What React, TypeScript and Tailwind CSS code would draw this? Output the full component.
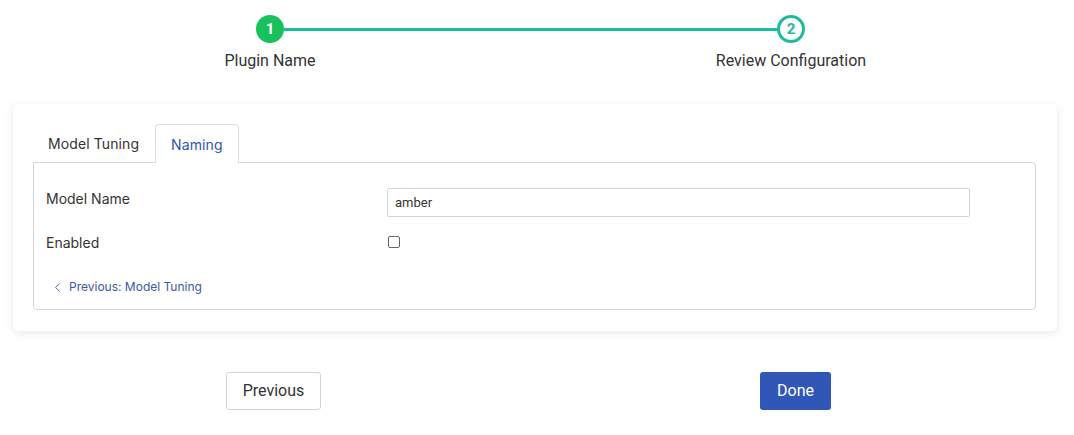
import { ChevronLeft } from "lucide-react";

export default function App() {
  return (
    <div className="h-[435px] w-[1074px] bg-white font-['Inter',sans-serif] text-[#333]">
      {/* stepper */}
      <div className="pt-[15px]">
        <div className="ml-[256px] flex w-[549px] items-center">
          <div className="flex h-[28px] w-[28px] items-center justify-center rounded-full bg-[#19c15c] font-['Roboto',sans-serif] text-[15px] font-bold text-white">
            1
          </div>
          <div className="h-[3px] flex-1 bg-[#1abc9c]" />
          <div className="flex h-[28px] w-[28px] items-center justify-center rounded-full border-[3px] border-[#1abc9c] bg-white font-['Roboto',sans-serif] text-[15px] font-bold text-[#1abc9c]">
            2
          </div>
        </div>
        <div className="mt-[7px] flex gap-[321px] pl-[170px] font-['Roboto',sans-serif] text-[16px] leading-[22px] text-[#333]">
          <div className="w-[200px] text-center">Plugin Name</div>
          <div className="w-[200px] text-center">Review Configuration</div>
        </div>
      </div>

      {/* card */}
      <div className="ml-[13px] mt-[32px] h-[227px] w-[1044px] rounded-[6px] bg-white px-[20px] pt-[20px] shadow-[0_2px_10px_rgba(0,0,0,0.09)]">
        <div className="flex text-[14px] tracking-[0.1px]">
          <div className="flex h-[38px] items-center px-[15px] text-[#333]">Model Tuning</div>
          <div className="relative z-10 -mb-px ml-px flex h-[39px] items-center rounded-t-[4px] border border-b-0 border-[#dcdcdc] bg-white px-[15px] text-[#2f55b6]">
            Naming
          </div>
        </div>
        <div className="h-[148px] w-[1003px] rounded-b-[4px] rounded-tr-[4px] border border-[#d6d6d6] px-[12px] pt-[25px]">
          <div className="flex items-start">
            <div className="w-[341px] pt-[1px] text-[14px] leading-[20px]">Model Name</div>
            <input
              defaultValue="amber"
              className="h-[29px] w-[583px] rounded-[2px] border border-[#d4d4d4] px-[7px] font-['Roboto',sans-serif] text-[13px] text-[#333] outline-none"
            />
          </div>
          <div className="mt-[15px] flex h-[20px] items-center">
            <div className="w-[342px] text-[14px]">Enabled</div>
            <div className="h-[12px] w-[12px] rounded-[2px] border border-[#666]" />
          </div>
          <div className="ml-[4px] mt-[25px] flex h-[20px] items-center gap-[4px] text-[12px] text-[#3a5aa8]">
            <ChevronLeft className="h-[15px] w-[15px]" strokeWidth={1.5} />
            <span>Previous: Model Tuning</span>
          </div>
        </div>
      </div>

      {/* buttons */}
      <div className="mt-[41px] flex pl-[226px]">
        <button className="h-[38px] w-[95px] rounded-[3px] border border-[#d4d4d4] bg-white font-['Roboto',sans-serif] text-[16px] text-[#333]">
          Previous
        </button>
        <button className="ml-[439px] h-[38px] w-[71px] rounded-[3px] bg-[#3056b8] font-['Roboto',sans-serif] text-[16px] text-white">
          Done
        </button>
      </div>
    </div>
  );
}
